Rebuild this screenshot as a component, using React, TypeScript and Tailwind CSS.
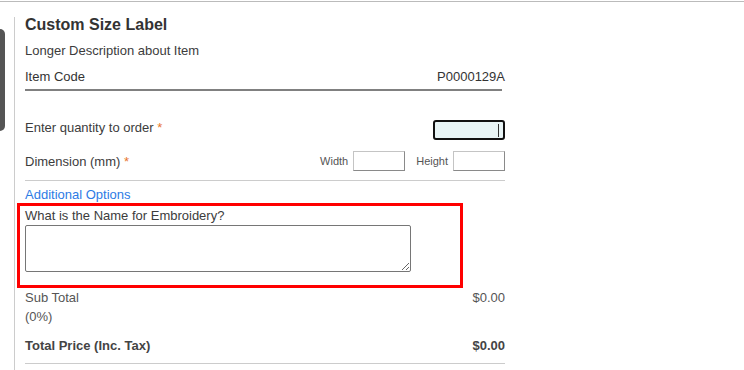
import React from "react";

export default function App() {
  return (
    <div
      className="w-[744px] h-[370px] bg-white overflow-hidden text-[#3c3c3c]"
      style={{ fontFamily: '"Liberation Sans", Arial, sans-serif' }}
    >
      <div className="h-px mt-px bg-[#bbb]" />
      <div className="flex">
        <div className="w-[5px] h-[102px] mt-[27px] bg-[#555] rounded-r-[5px]" />
        <div className="ml-[9px] mt-[15px] border-l border-[#ccc] pl-[10px] w-[500px] h-[360px]">
          <div className="w-[480px]">
            <div className="text-[16px] leading-[16px] font-bold text-[#333]">Custom Size Label</div>
            <div className="mt-[10px] text-[13px] leading-[16px]">Longer Description about Item</div>
            <div className="mt-[10px] flex justify-between text-[13px] leading-[16px] text-[#333]">
              <div className="w-[477px] pb-[4px] border-b-2 border-[#808080]">Item Code</div>
              <div className="ml-[-80px]">P0000129A</div>
            </div>
            <div className="mt-[29px] flex justify-between items-start">
              <div className="text-[13px] leading-[16px]">
                Enter quantity to order <span className="text-[#e8762c]">*</span>
              </div>
              <div className="relative w-[72px] h-[20px] border-2 border-[#111] rounded-[3px] bg-[#e8f4f5]">
                <span className="absolute right-[4px] top-[2px] w-px h-[13px] bg-[#333]" />
              </div>
            </div>
            <div className="mt-[11px] flex justify-between items-start pb-[9px] border-b border-[#ccc]">
              <div className="mt-[3px] text-[13px] leading-[16px]">
                Dimension (mm) <span className="text-[#e8762c]">*</span>
              </div>
              <div className="flex items-center text-[11px] text-[#555]">
                <span>Width</span>
                <div className="ml-[5px] w-[52px] h-[20px] border border-[#c4c4c4] border-r-[#8a8a8a] border-b-[#8a8a8a] bg-white" />
                <span className="ml-[11px]">Height</span>
                <div className="ml-[5px] w-[52px] h-[20px] border border-[#c4c4c4] border-r-[#8a8a8a] border-b-[#8a8a8a] bg-white" />
              </div>
            </div>
            <div className="mt-[6px] text-[13px] leading-[16px] text-[#2d7be5]">Additional Options</div>
            <div className="ml-[-8px] w-[446px] border-[3px] border-[#ff0000] pl-[5px] pt-[2px] pb-[13px]">
              <div className="text-[13px] leading-[16px]">What is the Name for Embroidery?</div>
              <textarea className="block mt-[1px] w-[386px] h-[47px] border border-[#767676] rounded-[2px] bg-white" />
            </div>
            <div className="flex justify-between text-[13px] leading-[19px] text-[#555]">
              <div>
                Sub Total
                <br />
                (0%)
              </div>
              <div>$0.00</div>
            </div>
            <div className="mt-[12px] flex justify-between text-[13px] leading-[16px] font-bold pb-[9px] border-b border-[#ccc] text-[#444]">
              <div>Total Price (Inc. Tax)</div>
              <div>$0.00</div>
            </div>
          </div>
        </div>
      </div>
    </div>
  );
}
